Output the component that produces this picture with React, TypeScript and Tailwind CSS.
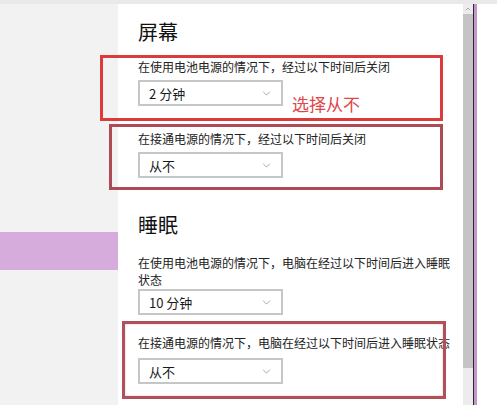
import { ChevronDown, ChevronUp } from "lucide-react";

const FONT = { fontFamily: '"Microsoft YaHei", "Noto Sans CJK SC", "Noto Sans", sans-serif' };

function Select({ value }: { value: string }) {
  return (
    <div className="flex h-[26px] w-[145px] items-center justify-between border-2 border-[#c6c6c6] bg-white pl-[9px] pr-[8px]">
      <span className="text-[13px] leading-none text-[#1a1a1a]">{value}</span>
      <ChevronDown size={13} strokeWidth={1.2} className="text-[#7a7a7a]" />
    </div>
  );
}

function Label({ children }: { children: React.ReactNode }) {
  return <div className="whitespace-nowrap text-[12px] leading-[15px] text-[#222]">{children}</div>;
}

export default function App() {
  return (
    <div className="flex h-[405px] w-[497px] flex-col overflow-hidden bg-white" style={FONT}>
      <div className="h-[4px] w-full bg-[#e9e9e9]" />
      <div className="flex flex-1">
        {/* sidebar */}
        <div className="w-[118px] bg-[#f2f2f2] pt-[228px]">
          <div className="h-[38px] bg-[#d6acdc]" />
        </div>

        {/* settings panel */}
        <div className="relative w-[345px] bg-white pl-[20px]">
          <div className="pt-[14px] text-[20px] leading-[28px] text-[#111]">屏幕</div>

          <div className="mt-[13px]">
            <Label>在使用电池电源的情况下，经过以下时间后关闭</Label>
          </div>
          <div className="mt-[6px]">
            <Select value="2 分钟" />
          </div>

          <div className="mt-[25px]">
            <Label>在接通电源的情况下，经过以下时间后关闭</Label>
          </div>
          <div className="mt-[6px]">
            <Select value="从不" />
          </div>

          <div className="mt-[33px] text-[20px] leading-[28px] text-[#111]">睡眠</div>

          <div className="mt-[15px] text-[12px] leading-[17px] text-[#222]">
            在使用电池电源的情况下，电脑在经过以下时间后进入睡眠
            <br />
            状态
          </div>
          <div className="mt-[1px]">
            <Select value="10 分钟" />
          </div>

          <div className="mt-[20px]">
            <Label>在接通电源的情况下，电脑在经过以下时间后进入睡眠状态</Label>
          </div>
          <div className="mt-[8px]">
            <Select value="从不" />
          </div>

          {/* annotations */}
          <div className="absolute left-[-18px] top-[51px] h-[66px] w-[343px] border-[3px] border-[#dd3a3c]" />
          <div className="absolute left-[174px] top-[89px] text-[17px] leading-[22px] text-[#e0474a]">选择从不</div>
          <div className="absolute left-[-9px] top-[120px] h-[66px] w-[334px] border-[3px] border-[#ad4a55]" />
          <div className="absolute left-[4px] top-[317px] h-[78px] w-[324px] border-[3px] border-[#b0505b] shadow-[inset_0_0_2px_#f0b0b8]" />
        </div>

        {/* scrollbar */}
        <div className="flex w-[10px] flex-col bg-[#ececec]">
          <div className="flex h-[10px] items-center justify-center">
            <ChevronUp size={8} strokeWidth={2} className="text-[#8a8a8a]" />
          </div>
          <div className="h-[354px] bg-[#c4c4c4]" />
        </div>
        <div className="w-[1px] bg-[#2c2430]" />
        <div className="w-[3px] bg-[#c596cc]" />
        <div className="flex-1 bg-white" />
      </div>
    </div>
  );
}
